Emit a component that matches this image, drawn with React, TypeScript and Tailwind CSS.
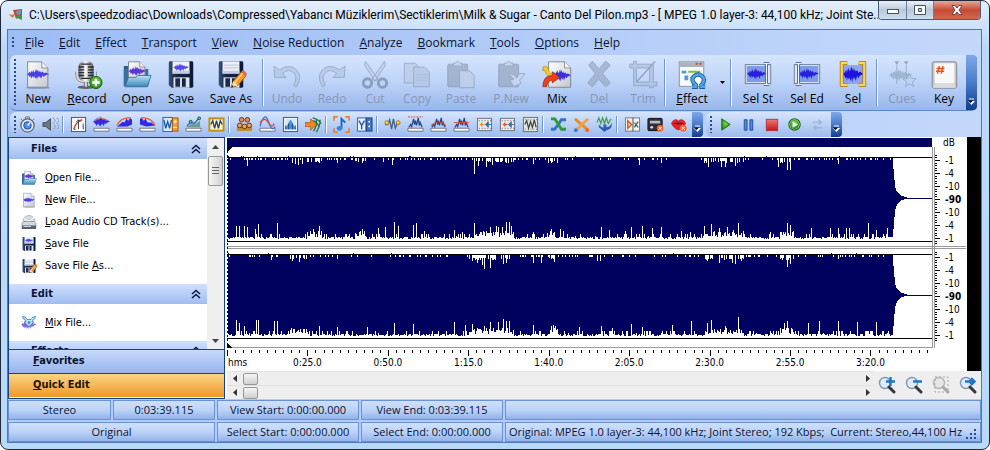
import type { ReactNode } from "react";

const MENU = [
  "File",
  "Edit",
  "Effect",
  "Transport",
  "View",
  "Noise Reduction",
  "Analyze",
  "Bookmark",
  "Tools",
  "Options",
  "Help",
];

const WAVE_D =
  "M0 6L2 5L3 3L4 5L5 2L6 4L7 1L8 4L9 3L10 0L11 3L12 1L13 4L14 2L15 4L17 3L18 5L20 4L24 6L20 7L18 9L17 7L15 11L14 8L13 10L12 8L11 12L10 9L9 11L8 8L7 10L6 8L5 11L4 8L3 9L2 7Z";

function Wave({ at, fill = "#3a2ee0" }: { at: string; fill?: string }) {
  return <path d={WAVE_D} fill={fill} transform={at} />;
}

function Defs() {
  return (
    <svg className="absolute size-0" aria-hidden="true">
      <defs>
        <linearGradient id="paper" x1="0" y1="0" x2="1" y2="1">
          <stop offset="0" stopColor="#ffffff" />
          <stop offset="1" stopColor="#c3c7ce" />
        </linearGradient>
        <linearGradient id="metal" x1="0" y1="0" x2="1" y2="0">
          <stop offset="0" stopColor="#55585c" />
          <stop offset=".45" stopColor="#ffffff" />
          <stop offset="1" stopColor="#4a4d52" />
        </linearGradient>
        <linearGradient id="folder" x1="0" y1="0" x2="0" y2="1">
          <stop offset="0" stopColor="#b9e2f7" />
          <stop offset="1" stopColor="#3a87b8" />
        </linearGradient>
        <linearGradient id="disk" x1="0" y1="0" x2="1" y2="0">
          <stop offset="0" stopColor="#39527c" />
          <stop offset=".3" stopColor="#142445" />
          <stop offset="1" stopColor="#0b1a38" />
        </linearGradient>
        <radialGradient id="green" cx=".5" cy=".35" r=".7">
          <stop offset="0" stopColor="#7edc55" />
          <stop offset="1" stopColor="#17800f" />
        </radialGradient>
        <linearGradient id="red" x1="0" y1="0" x2="0" y2="1">
          <stop offset="0" stopColor="#f07b73" />
          <stop offset="1" stopColor="#c2151b" />
        </linearGradient>
      </defs>
    </svg>
  );
}

function Page() {
  return (
    <>
      <ellipse cx="16" cy="30" rx="13" ry="1.5" fill="#4c6a96" opacity=".45" />
      <path d="M5 2.5H20L26.5 9V29.5H5Z" fill="url(#paper)" stroke="#7d848f" />
      <path d="M20 2.5V9H26.5" fill="#f4f5f7" stroke="#8b919b" />
    </>
  );
}

function Floppy() {
  return (
    <>
      <path d="M3 3.5Q3 2 4.500 2H27.500Q29 2 29 3.500V28.500Q29 30 27.500 30H6L3 27Z" fill="url(#disk)" />
      <rect x="7" y="2" width="18" height="13" fill="#eef1fa" />
      <path d="M7 12H25V15H7Z" fill="#c4cbe0" />
      <rect x="8" y="19" width="17" height="11" fill="#dfe3ea" />
      <rect x="10" y="20" width="5" height="9" fill="#1b2b4d" />
      <rect x="17" y="20" width="4" height="9" fill="#142445" />
    </>
  );
}

function Pencil() {
  return (
    <g>
      <path d="M16 30L18.500 23L27 13L32 17.500L23.500 27.500Z" fill="#f29a27" stroke="#8c4a0c" strokeWidth=".8" />
      <path d="M20 24.500L28.500 14.500" stroke="#ffd07a" strokeWidth="1.500" />
      <path d="M27 13L29 11L33 15L32 17.500Z" fill="#d96a62" />
      <path d="M16 30L18.500 23L23.500 27.500Z" fill="#f7dcae" />
      <path d="M16 30L17 27L19 28.600Z" fill="#222" />
    </g>
  );
}

const GREY = { fill: "#b3c6e2", stroke: "#8496b2", strokeWidth: 1 };

const BIG: Record<string, ReactNode> = {
  new: (
    <>
      <Page />
      <Wave at="translate(4 10) scale(1 .95)" fill="#4a3fe6" />
    </>
  ),
  record: (
    <>
      <ellipse cx="15" cy="29.500" rx="9" ry="1.800" fill="#5c6470" />
      <path d="M4 13V17Q4 25 15 25T26 17V13" fill="none" stroke="#d9dde2" strokeWidth="3" />
      <path d="M4 13V17Q4 25 15 25T26 17V13" fill="none" stroke="#6d737c" strokeWidth=".8" />
      <path d="M13 24H17V29H13Z" fill="url(#metal)" />
      <rect x="7" y="2" width="16" height="21" rx="6" fill="url(#metal)" />
      <path d="M7 8H13M7 11H13M7 14H13M7 17H13M17 8H23M17 11H23M17 14H23M17 17H23M10 5H20M10 20H20" stroke="#2a2c30" strokeWidth="1.400" />
      <circle cx="25.500" cy="24.500" r="6.500" fill="url(#green)" stroke="#11680c" />
      <path d="M25.500 20.500V28.500M21.500 24.500H29.500" stroke="#fff" strokeWidth="2.500" />
    </>
  ),
  open: (
    <>
      <path d="M2 7H8L10 10V28H2Z" fill="#2d5f8e" />
      <path d="M2 10H28V28H2Z" fill="#3b6f9f" />
      <path d="M7 2.500H19L24.500 8V20H7Z" fill="url(#paper)" stroke="#7d848f" />
      <path d="M19 2.500V8H24.500" fill="#f4f5f7" stroke="#8b919b" />
      <Wave at="translate(7 7) scale(.78 .9)" fill="#5a35d8" />
      <path d="M3 29L7 19H15L17 17H31L27 29Z" fill="url(#folder)" stroke="#27608f" strokeWidth=".8" />
    </>
  ),
  save: (
    <>
      <Floppy />
      <Wave at="translate(8 4) scale(.68 .75)" fill="#5447ee" />
    </>
  ),
  saveas: (
    <>
      <Floppy />
      <path d="M8 6H24M8 9H24" stroke="#b9bfcc" />
      <Pencil />
    </>
  ),
  undo: <path d="M2 7L3 19H15L11 15Q18 9 23 14T23 27L26 29Q33 18 26 11T8 11Z" {...GREY} />,
  redo: <path d="M30 7L29 19H17L21 15Q14 9 9 14T9 27L6 29Q-1 18 6 11T24 11Z" {...GREY} />,
  cut: (
    <>
      <path d="M6 2L19 21L16 23L5 6ZM26 2L13 21L16 23L27 6Z" fill="#bccde6" stroke="#8496b2" />
      <circle cx="8" cy="25" r="4.500" fill="none" stroke="#7788a4" strokeWidth="3" />
      <circle cx="24" cy="25" r="4.500" fill="none" stroke="#7788a4" strokeWidth="3" />
    </>
  ),
  copy: (
    <>
      <path d="M2.500 4H14L19 9V25H2.500Z" fill="#b9cbe6" stroke="#8a9dbc" />
      <path d="M12.500 8H24L29 13V29H12.500Z" fill="#b4c6e0" stroke="#8597b6" />
      <path d="M15 16H26M15 19H26M15 22H26" stroke="#9fb2cf" />
    </>
  ),
  paste: (
    <>
      <rect x="2" y="5" width="21" height="24" rx="1" fill="#94a5bf" stroke="#7d8eaa" />
      <path d="M8 7V4H10Q12 0 15 4H17V7Z" fill="#c3d2e8" stroke="#8799b5" />
      <path d="M14.500 12H25L30 17V30H14.500Z" fill="#bccde6" stroke="#8597b6" />
    </>
  ),
  pnew: (
    <>
      <rect x="3" y="5" width="21" height="24" rx="1" fill="#94a5bf" stroke="#7d8eaa" />
      <path d="M9 7V4H11Q13 0 16 4H18V7Z" fill="#c3d2e8" stroke="#8799b5" />
      <path d="M13 14L20 17L22 20L25 15H31L25 22L27 25L19 29L15 22L19 21Z" fill="#c6d5ea" stroke="#8597b6" />
    </>
  ),
  mix: (
    <>
      <path d="M7 2.500H24L30.500 9V29.500H7Z" fill="url(#paper)" stroke="#7d848f" />
      <path d="M24 2.500V9H30.500" fill="#f4f5f7" stroke="#8b919b" />
      <Wave at="translate(11 10) scale(.82 1.150)" fill="#3a2ee0" />
      <path d="M1 8Q6 6 7 11T14 15V19Q6 19 4 14T1 12Z" fill="#f8c92c" stroke="#b78308" strokeWidth=".7" />
      <path d="M1 29Q1 17 11 17V13L19 19L11 25V22Q6 22 5 29Z" fill="#e8421c" stroke="#9c1f08" strokeWidth=".7" />
    </>
  ),
  del: (
    <path d="M5 6L9 2L16 10L23 2L28 6L20 15L28 25L23 29L16 21L9 29L4 25L12 15Z" fill="#97a9c4" stroke="#8294b1" />
  ),
  trim: (
    <>
      <path d="M2 5H6V2H9V5H27V24H31V28H27V30H23V28H6V9H2ZM9 9V24H23V9Z" fill="#adc0dc" fillRule="evenodd" stroke="#8294b1" />
      <path d="M9 24L29 2" stroke="#7788a4" strokeWidth="1.500" />
    </>
  ),
  effect: (
    <>
      <rect x="2.500" y="2.500" width="26" height="26" fill="#f8fafc" stroke="#8a929d" />
      <path d="M3 3H28V8H3Z" fill="#aab3c0" />
      <path d="M20 4.500H22M24 4.500H26" stroke="#d43d2b" strokeWidth="2" />
      <path d="M5 12H10V15H5ZM8 17H12V22H8Z" fill="#4f9ade" />
      <path d="M12 13H25M14 19H20" stroke="#7bbf4a" strokeWidth="2" />
      <path d="M16 29H20V27Q14 22 18 18Q23 14 27 18Q31 22 26 27V29H30" fill="none" stroke="#1b5e9b" strokeWidth="4.500" />
      <path d="M16 29H20V27Q14 22 18 18Q23 14 27 18Q31 22 26 27V29H30" fill="none" stroke="#4fa6e6" strokeWidth="2.600" />
    </>
  ),
  selst: (
    <>
      <rect x="2.500" y="5.500" width="27" height="20" fill="#dfe7f6" stroke="#6f7d95" />
      <rect x="4" y="7" width="20" height="17" fill="#7f9be6" />
      <Wave at="translate(4 9) scale(.9 1.050)" fill="#2620dc" />
      <path d="M22 4.500H28M22 26.500H28M25 4V27" stroke="#1e5a96" strokeWidth="3" />
      <path d="M22 4.500H28M22 26.500H28M25 4V27" stroke="#e8f5ff" strokeWidth="1.300" />
    </>
  ),
  seled: (
    <>
      <rect x="2.500" y="5.500" width="27" height="20" fill="#dfe7f6" stroke="#6f7d95" />
      <rect x="8" y="7" width="20" height="17" fill="#7f9be6" />
      <Wave at="translate(7 9) scale(.9 1.050)" fill="#2620dc" />
      <path d="M4 4.500H10M4 26.500H10M7 4V27" stroke="#1e5a96" strokeWidth="3" />
      <path d="M4 4.500H10M4 26.500H10M7 4V27" stroke="#e8f5ff" strokeWidth="1.300" />
    </>
  ),
  sel: (
    <>
      <rect x="5" y="6" width="22" height="20" fill="#8ea5ea" />
      <Wave at="translate(5 7) scale(.92 1.450)" fill="#1d12dc" />
      <path d="M10 4H4V27H10M22 4H28V27H22" fill="none" stroke="#a8720a" strokeWidth="4" />
      <path d="M10 4H4V27H10M22 4H28V27H22" fill="none" stroke="#ffd65a" strokeWidth="2.400" />
    </>
  ),
  cues: (
    <>
      <Wave at="translate(2 10) scale(1.050 1.100)" fill="#93a6c4" />
      <path d="M8 2H13L10.500 6ZM18 2H23L20.500 6Z" fill="#7e90ae" />
      <path d="M10.500 6V26M20.500 6V20" stroke="#8597b6" />
      <path d="M24 15L26 20L31 20.500L27 24L28.500 29L24 26L19.500 29L21 24L17 20.500L22 20Z" fill="#bfcfe6" stroke="#8a9dbc" />
    </>
  ),
  key: (
    <>
      <rect x="3.500" y="2.500" width="26" height="28" rx="2" fill="#c9c9cb" stroke="#7f848c" />
      <path d="M6 4H27V25H6Z" fill="#f8f8f8" />
      <path d="M4 30L7 25H26L29 30Z" fill="#dcdcde" />
      <path d="M11 7L9 15M15 7L13 15M8 9.500H16.500M7.500 12.500H16" stroke="#e2531d" strokeWidth="1.600" />
    </>
  ),
};

type Tool = { icon?: string; label?: string; width?: string; off?: boolean; key0?: boolean };

const TOOLS: Tool[] = [
  { icon: "new", label: "New", width: "w-11" },
  { icon: "record", label: "Record", width: "w-[54px]", key0: true },
  { icon: "open", label: "Open", width: "w-[46px]" },
  { icon: "save", label: "Save", width: "w-[42px]" },
  { icon: "saveas", label: "Save As", width: "w-[58px]" },
  {},
  { icon: "undo", label: "Undo", width: "w-[42px]", off: true },
  { icon: "redo", label: "Redo", width: "w-12", off: true },
  { icon: "cut", label: "Cut", width: "w-[38px]", off: true },
  { icon: "copy", label: "Copy", width: "w-[46px]", off: true },
  { icon: "paste", label: "Paste", width: "w-[42px]", off: true },
  { icon: "pnew", label: "P.New", width: "w-[58px]", off: true },
  { icon: "mix", label: "Mix", width: "w-[34px]" },
  { icon: "del", label: "Del", width: "w-[50px]", off: true },
  { icon: "trim", label: "Trim", width: "w-[38px]", off: true },
  {},
  { icon: "effect", label: "Effect", width: "w-12", key0: true },
  { icon: "caret", label: "Effect list", width: "w-3" },
  {},
  { icon: "selst", label: "Sel St", width: "w-12" },
  { icon: "seled", label: "Sel Ed", width: "w-[50px]" },
  { icon: "sel", label: "Sel", width: "w-[42px]" },
  {},
  { icon: "cues", label: "Cues", width: "w-11", off: true },
  { icon: "key", label: "Key", width: "w-10" },
];

const base = <path d="M1 13H17V16H1Z" fill="#fff" stroke="#555d6b" strokeWidth=".8" />;
const spikes = <path d="M2 12L4 9L5 11L7 3L8 9L9 5L10 10L12 2L13 10L14 7L16 12" fill="none" stroke="#27468a" strokeWidth="1.300" />;
const frame = <rect x="1.500" y="1.500" width="15" height="15" fill="#f6f8fb" stroke="#4b5360" />;

function Panel({ accent }: { accent: string }) {
  return (
    <>
      <rect x="1.500" y="2.500" width="15" height="13" fill="#e9eaec" stroke="#6b6f76" />
      <path d="M3 5H16M3 13H16" stroke="#555" strokeDasharray="1 2" />
      <path d="M4 9H9M6 7V11" stroke={accent} strokeWidth="1.500" />
      <path d="M10 9L13 6V12ZM13 9H16" stroke="#2f6db4" fill="#2f6db4" />
    </>
  );
}

const SMALL: Record<string, ReactNode> = {
  timer: (
    <>
      <path d="M7 1H11V4H7ZM2 3L4 5M16 3L14 5" stroke="#66707e" fill="#d7dbe0" />
      <circle cx="9" cy="10" r="7" fill="#dfe8f5" stroke="#5e6b7f" strokeWidth="1.400" />
      <circle cx="9" cy="10" r="4" fill="#4f8fe8" stroke="#1f4fa8" />
      <path d="M9 10L12 7" stroke="#fff" strokeWidth="1.500" />
    </>
  ),
  speaker: (
    <>
      <path d="M1 7H4L9 3V15L4 11H1Z" fill="#6d7784" stroke="#444b55" />
      <path d="M12 2L14 5L12 8L14 11L12 15M16 2L18 5L16 8L18 11L16 15" fill="none" stroke="#7f8a99" strokeDasharray="2 1" />
    </>
  ),
  gauge: (
    <>
      {frame}
      <path d="M4 14Q6 6 13 4" fill="none" stroke="#d14a22" strokeWidth="1.500" />
      <path d="M4 14H6M9 14V4M7 6L9 4L11 6M14 8V14" stroke="#3c4656" fill="none" />
    </>
  ),
  blue: (
    <>
      {base}
      <Wave at="translate(0 0) scale(.75 1)" fill="#3428e0" />
      <path d="M2 5Q9 0 16 5" stroke="#e16b52" fill="none" />
    </>
  ),
  fadein: (
    <>
      {base}
      <path d="M1 11L5 8L7 6L9 7L11 3L13 5L15 2L17 4V9L12 11Z" fill="#3428e0" />
      <path d="M1 10Q5 1 16 2" stroke="#e8562a" strokeWidth="1.300" fill="none" />
    </>
  ),
  fadeout: (
    <>
      {base}
      <path d="M1 3L3 2L5 5L7 3L9 7L13 7L17 10L8 11L1 9Z" fill="#3428e0" />
      <path d="M2 2Q13 1 17 10" stroke="#e8562a" strokeWidth="1.300" fill="none" />
    </>
  ),
  stretch: (
    <>
      <rect x="1" y="1.500" width="10" height="15" fill="#d8ecff" stroke="#2c62a0" />
      <path d="M2 4L4 13L6 6L8 13L10 4" fill="none" stroke="#1d55a5" strokeWidth="1.400" />
      <rect x="11" y="2" width="6" height="14" fill="#f49b2f" stroke="#a8590b" />
      <path d="M14 4V8M12 6H16M12 12H16" stroke="#fff" />
    </>
  ),
  envelope: (
    <>
      {base}
      <path d="M3 11L7 8L11 9L16 5V12H3Z" fill="#6a9c8f" />
      <path d="M2 11L6 6L10 8L15 2" fill="none" stroke="#2e6fb6" strokeWidth="1.500" />
      <circle cx="6" cy="6" r="1.500" fill="#5fcf7a" stroke="#224455" />
      <circle cx="15" cy="2.500" r="1.500" fill="#5fcf7a" stroke="#224455" />
    </>
  ),
  normalize: (
    <>
      <rect x="1.500" y="2.500" width="15" height="13" fill="#fff4c4" stroke="#c28e12" strokeWidth="2" />
      <path d="M3 9L5 5L7 13L9 5L11 13L13 5L15 9" fill="none" stroke="#2a4277" strokeWidth="1.400" />
    </>
  ),
  chorus: (
    <>
      <path d="M1 16V11H17V16Z" fill="#c58a35" />
      <circle cx="4" cy="10" r="2.500" fill="#e2a566" stroke="#5d2f10" />
      <circle cx="9" cy="11" r="2.500" fill="#e2a566" stroke="#5d2f10" />
      <circle cx="14" cy="10" r="2.500" fill="#e2a566" stroke="#5d2f10" />
      <circle cx="6" cy="4" r="2.500" fill="#d9925a" stroke="#7a2a10" />
      <circle cx="12" cy="4" r="2.500" fill="#d9925a" stroke="#7a2a10" />
    </>
  ),
  flanger: (
    <>
      {base}
      <path d="M1 11Q6-6 10 6T17 11" fill="none" stroke="#3a72d0" strokeWidth="1.300" />
      <path d="M1 7Q6 0 10 7T16 8" fill="none" stroke="#db4334" strokeWidth="1.300" />
    </>
  ),
  equalizer: (
    <>
      {frame}
      <rect x="3" y="3" width="12" height="12" fill="#d5e8fa" />
      <path d="M3 14L6 9L8 5L9 4L10 5L12 9L15 14Z" fill="#3e94e2" />
      <path d="M4 10V14M7 8V14M11 8V14M14 10V14" stroke="#26446f" />
    </>
  ),
  reverb: (
    <>
      <path d="M8 2Q14 3 17 8M8 5Q13 6 15 12M9 16Q13 10 12 4M12 17Q16 11 16 4" fill="none" stroke="#1f7a50" strokeWidth="1.400" />
      <path d="M0 7H6V3L12 9L6 15V11H0Z" fill="#f28a22" stroke="#b1550a" strokeWidth=".8" />
    </>
  ),
  pitch: (
    <>
      <path d="M1 5V1H5M13 1H17V5M17 13V17H13M5 17H1V13" fill="none" stroke="#f08228" strokeWidth="1.800" />
      <path d="M9 13V3L13 7" fill="none" stroke="#1d66bd" strokeWidth="2" />
      <ellipse cx="7" cy="13" rx="3" ry="2.500" fill="#2f8be0" />
    </>
  ),
  vocoder: (
    <>
      <rect x="1.500" y="2" width="9" height="14" fill="#e4f1ff" stroke="#2c62a0" />
      <path d="M3 5L6 10L9 5M6 10V14" fill="none" stroke="#27589b" strokeWidth="1.500" />
      <rect x="11" y="2" width="6" height="14" fill="#3d77c7" stroke="#1b427f" />
      <circle cx="14" cy="6" r="1" fill="#fff" />
      <circle cx="14" cy="11" r="1" fill="#fff" />
    </>
  ),
  restore: (
    <>
      <path d="M1 9H4L6 4L8 14L10 3L12 13L14 8H17" fill="none" stroke="#40608e" strokeWidth="1.400" />
      <circle cx="3" cy="7" r="2" fill="#ffd23d" stroke="#a87708" />
      <circle cx="15" cy="7" r="2" fill="#ffd23d" stroke="#a87708" />
    </>
  ),
  clip: (
    <>
      {base}
      {spikes}
      <path d="M1 1H17" stroke="#ee4a20" strokeDasharray="2 1" />
    </>
  ),
  pops: (
    <>
      {base}
      {spikes}
      <path d="M1 10Q9 3 17 10" stroke="#d9432c" fill="none" />
    </>
  ),
  hiss: (
    <>
      {base}
      {spikes}
      <path d="M1 7H17" stroke="#ee4a20" />
    </>
  ),
  panelA: <Panel accent="#e59a20" />,
  panelB: <Panel accent="#e1592c" />,
  profile: (
    <>
      <rect x="1.500" y="1.500" width="15" height="15" fill="#e5e6e8" stroke="#6b6f76" />
      <path d="M3 4H16M3 14H16" stroke="#666" strokeDasharray="1 2" />
      <path d="M3 9L5 5L7 13L9 6L11 12L13 4L15 12" fill="none" stroke="#37493c" strokeWidth="1.300" />
    </>
  ),
  crossA: (
    <>
      <path d="M1 14H5Q9 9 12 4H17" fill="none" stroke="#2f74cc" strokeWidth="3" />
      <path d="M1 3H5Q9 9 12 14H17" fill="none" stroke="#2d9a33" strokeWidth="3" />
    </>
  ),
  crossB: (
    <>
      <path d="M2 3L16 15" stroke="#ee8a23" strokeWidth="3" />
      <path d="M16 3L3 15" stroke="#e7a640" strokeWidth="3" />
      <circle cx="3" cy="15" r="2" fill="#3a78c8" />
      <circle cx="15" cy="15" r="2" fill="#ee6a23" />
    </>
  ),
  invert: (
    <>
      <path d="M1 7L3 2L5 8L7 2L9 8L11 2L13 8L16 3" fill="none" stroke="#45a05a" strokeWidth="1.300" />
      <path d="M3 9Q6 13 8 12V9H11V12Q15 12 17 7Q17 15 11 15L9 17L3 12Z" fill="#2b5fb0" />
    </>
  ),
  split: (
    <>
      <rect x="1.500" y="2" width="15" height="14" fill="#f2f2f2" stroke="#777" />
      <path d="M4 5V13L8 9Z" fill="none" stroke="#e2561d" strokeWidth="1.600" />
      <path d="M9.500 2V16" stroke="#444" />
      <path d="M11 12L15 6M11 7L15 12" stroke="#376c58" strokeWidth="1.400" />
    </>
  ),
  batch: (
    <>
      <rect x="1" y="2.500" width="15" height="13" rx="1" fill="#2e3036" stroke="#111" />
      <path d="M3 5H14V8H3Z" fill="#b7bcc4" />
      <circle cx="5" cy="12" r="1.500" fill="#ddd" />
      <circle cx="14" cy="13" r="3.500" fill="#ee6a2b" />
      <path d="M12.500 11.500L15.500 14.500M15.500 11.500L12.500 14.500" stroke="#fff" />
    </>
  ),
  voice: (
    <>
      <path d="M1 8Q5 1 9 5Q13 1 17 8Q13 15 9 15T1 8Z" fill="#d8262c" />
      <path d="M3 8Q9 6 15 8Q9 10 3 8Z" fill="#8e0e16" />
      <circle cx="14" cy="13" r="3.500" fill="#ee6a2b" />
      <path d="M12.500 11.500L15.500 14.500M15.500 11.500L12.500 14.500" stroke="#fff" />
    </>
  ),
  play: <path d="M5 3L14 9L5 15Z" fill="url(#green)" stroke="#19700f" />,
  pause: <path d="M4.500 4H7.500V15H4.500ZM10.500 4H13.500V15H10.500Z" fill="#4f8bd8" stroke="#1d4e9c" />,
  stop: <rect x="3.500" y="3.500" width="12" height="12" fill="url(#red)" stroke="#b3353a" />,
  playloop: (
    <>
      <circle cx="9" cy="9" r="6" fill="#fff" stroke="#176410" strokeWidth="1.200" />
      <circle cx="9" cy="9" r="5" fill="url(#green)" />
      <path d="M7 5.500L12.500 9L7 12.500Z" fill="#fff" />
    </>
  ),
  repeat: <path d="M4 6.500H12M10 4L13 6.500L10 9M14 12.500H6M8 10L5 12.500L8 15" fill="none" stroke="#9db3d6" strokeWidth="1.500" />,
};

const SMALL_GROUPS: [string, string][][] = [
  [["timer", "Timer"], ["speaker", "Volume"]],
  [
    ["gauge", "Amplify"],
    ["blue", "Fade"],
    ["fadein", "Fade in"],
    ["fadeout", "Fade out"],
    ["stretch", "Stretch"],
    ["envelope", "Envelope"],
    ["normalize", "Normalize"],
  ],
  [["chorus", "Chorus"], ["flanger", "Flanger"], ["equalizer", "Equalizer"], ["reverb", "Reverb"]],
  [["pitch", "Pitch"], ["vocoder", "Vocoder"]],
  [
    ["restore", "Restore"],
    ["clip", "Clip repair"],
    ["pops", "Remove pops"],
    ["hiss", "Remove hiss"],
    ["panelA", "Low filter"],
    ["panelB", "High filter"],
    ["profile", "Noise profile"],
  ],
  [["crossA", "Swap channels"], ["crossB", "Cut channels"], ["invert", "Invert"]],
  [["split", "Split"], ["batch", "Batch"], ["voice", "Remove voice"]],
];

const PLAYBACK: [string, string][] = [
  ["play", "Play"],
  ["pause", "Pause"],
  ["stop", "Stop"],
  ["playloop", "Play loop"],
  ["repeat", "Repeat"],
];

function Grip() {
  return <span className="my-1 ml-1 w-0.5 shrink-0 bg-[repeating-linear-gradient(#2a4a8c_0_2px,transparent_2px_4px)]" />;
}

function Separator() {
  return <span className="mx-0.5 my-1 w-0.5 shrink-0 self-stretch border-l border-[#6f97d6] bg-white" />;
}

function Overflow() {
  return (
    <button
      type="button"
      aria-label="More buttons"
      className="flex w-[11px] shrink-0 items-end justify-center rounded-r-sm bg-linear-to-b from-[#7fa8e8] via-[#4a7bcb] to-[#143c8c] pb-1"
    >
      <svg className="h-2 w-[7px]" viewBox="0 0 7 8">
        <path d="M1 1H6" stroke="#fff" />
        <path d="M0 3H7L3.500 7Z" fill="#fff" />
        <path d="M1 0H5M0 2.500H5L2.500 5Z" fill="#000" />
      </svg>
    </button>
  );
}

function SmallButton({ icon, label }: { icon: string; label: string }) {
  return (
    <button type="button" aria-label={label} className="flex w-[23px] shrink-0 items-center justify-center">
      <svg className="size-[17px]" viewBox="0 0 18 18">{SMALL[icon]}</svg>
    </button>
  );
}

function ToolButton({ tool }: { tool: Tool }) {
  if (!tool.icon || !tool.label) return <Separator />;
  if (tool.icon === "caret") {
    return (
      <button type="button" aria-label={tool.label} className={`flex shrink-0 items-center justify-center ${tool.width}`}>
        <svg className="h-[3px] w-[5px]" viewBox="0 0 5 3"><path d="M0 0H5L2.500 3Z" /></svg>
      </button>
    );
  }
  return (
    <button
      type="button"
      disabled={tool.off}
      className={`flex shrink-0 flex-col items-center pt-1 whitespace-nowrap text-black disabled:text-[#8796b3] ${tool.width}`}
    >
      <svg className={`size-8 ${tool.off ? "opacity-70" : ""}`} viewBox="-1 0 34 33">{BIG[tool.icon]}</svg>
      <span className="leading-4">
        {tool.key0 ? <><u>{tool.label[0]}</u>{tool.label.slice(1)}</> : tool.label}
      </span>
    </button>
  );
}

function TitleBar() {
  return (
    <header className="flex h-7 shrink-0 items-start">
      <svg className="mt-2 mr-1.5 h-3 w-4 shrink-0" viewBox="0 0 16 12">
        <path d="M0 4Q3 7 8 5L6 9Z" fill="#e0742c" />
        <path d="M6 1L15 0V7L9 10Z" fill="#c8452e" />
        <path d="M9 2L14 1V5L10 6Z" fill="#4f9fd8" />
        <path d="M8 7L15 6V11L10 9Z" fill="#3d9a3c" />
      </svg>
      <h1 className="min-w-0 flex-1 overflow-hidden pt-1.5 font-['Roboto','Open_Sans',sans-serif] text-[12px] leading-4 whitespace-nowrap text-black">
        {"C:\\Users\\speedzodiac\\Downloads\\Compressed\\Yabancı Müziklerim\\Sectiklerim\\Milk & Sugar - Canto Del Pilon.mp3 - [ MPEG 1.0 layer-3: 44,100 kHz; Joint Ste..."}
      </h1>
      <div className="mr-px flex h-[19px] shrink-0 overflow-hidden rounded-b border border-t-0 border-[#4d5f78]">
        <button type="button" aria-label="Minimize" className="flex w-7 items-center justify-center border-r border-[#6c7f98] bg-linear-to-b from-[#e9f1f9] via-[#b8c9dd] to-[#cfdff0]">
          <svg className="h-3 w-3" viewBox="0 0 12 12"><rect x=".5" y="5.500" width="11" height="4" fill="#fff" stroke="#4a5260" /></svg>
        </button>
        <button type="button" aria-label="Maximize" className="flex w-[27px] items-center justify-center border-r border-[#6c7f98] bg-linear-to-b from-[#e9f1f9] via-[#b8c9dd] to-[#cfdff0]">
          <svg className="h-3 w-3" viewBox="0 0 12 12">
            <path d="M.5 1.500H11.500V10.500H.5ZM4.500 4.500V7.500H7.500V4.500Z" fill="#fff" fillRule="evenodd" stroke="#4a5260" />
          </svg>
        </button>
        <button type="button" aria-label="Close" className="flex w-[46px] items-center justify-center bg-linear-to-b from-[#e8a795] via-[#c54a34] to-[#d4674e]">
          <svg className="h-3 w-3" viewBox="0 0 12 12">
            <path d="M1 1.500H4L6 4L8 1.500H11L8 6L11 10.500H8L6 8L4 10.500H1L4 6Z" fill="#fff" stroke="#5b3038" strokeWidth=".8" />
          </svg>
        </button>
      </div>
    </header>
  );
}

const SIDE_ICONS: Record<string, ReactNode> = {
  open: BIG.open,
  new: BIG.new,
  save: BIG.save,
  saveas: BIG.saveas,
  cd: (
    <>
      <circle cx="16" cy="15" r="12" fill="#d8dce2" stroke="#7b818b" />
      <circle cx="16" cy="15" r="4" fill="#fff" stroke="#8b919b" />
      <path d="M16 15L26 7M16 15L6 9" stroke="#fff" strokeWidth="2" />
      <path d="M2 19L6 15H26L30 19V29H2Z" fill="#d5d8dd" stroke="#5f6670" />
      <path d="M2 23H30V30H2Z" fill="#596172" />
      <path d="M5 25H20" stroke="#c9ced6" strokeWidth="2" />
    </>
  ),
  mix: (
    <>
      <Wave at="translate(0 10) scale(1.300 1.600)" fill="#8568dd" />
      <path d="M3 3Q9 2 12 9H20Q23 2 29 3L28 7Q24 7 22 14H26L16 23L6 14H10Q8 7 4 7Z" fill="#bfe3fa" stroke="#2e83c4" strokeWidth="1.600" />
      <circle cx="16" cy="15" r="2.500" fill="#2e83c4" />
    </>
  ),
};

type SideItem = { icon: string; text: string; key: number };

const FILE_ITEMS: SideItem[] = [
  { icon: "open", text: "Open File...", key: 0 },
  { icon: "new", text: "New File...", key: 0 },
  { icon: "cd", text: "Load Audio CD Track(s)...", key: 0 },
  { icon: "save", text: "Save File", key: 0 },
  { icon: "saveas", text: "Save File As...", key: 10 },
];

const EDIT_ITEMS: SideItem[] = [{ icon: "mix", text: "Mix File...", key: 0 }];

function SideGroup({ title, items }: { title: string; items: SideItem[] }) {
  return (
    <section>
      <h2 className="flex h-5 items-center justify-between bg-linear-to-b from-[#cfe0fc] to-[#9fbdf0] pr-1.5 pl-[22px] font-bold text-[#0b1440]">
        {title}
        <svg className="size-2.5" viewBox="0 0 10 10">
          <path d="M1 5L5 1.500L9 5M1 9L5 5.500L9 9" fill="none" stroke="#0b1440" strokeWidth="1.400" />
        </svg>
      </h2>
      <ul className="pt-2 pb-[7px]">
        {items.map((item) => (
          <li key={item.text} className="h-[22px] pl-3">
            <a href="#" className="flex h-full items-center gap-2 text-black">
              <svg className="size-4 shrink-0" viewBox="0 0 32 32">{SIDE_ICONS[item.icon]}</svg>
              <span>
                {item.text.slice(0, item.key)}
                <u>{item.text[item.key]}</u>
                {item.text.slice(item.key + 1)}
              </span>
            </a>
          </li>
        ))}
      </ul>
    </section>
  );
}

function SidePanel() {
  return (
    <aside className="w-[217px] shrink-0 border border-[#14428c] bg-white font-['DejaVu_Sans_Condensed','Open_Sans',sans-serif] text-[11px]">
      <div className="flex h-[211px]">
        <div className="min-w-0 flex-1 overflow-hidden border-t border-[#cfe0fc]">
          <SideGroup title="Files" items={FILE_ITEMS} />
          <SideGroup title="Edit" items={EDIT_ITEMS} />
          <SideGroup title="Effects" items={[]} />
        </div>
        <div className="flex w-[17px] shrink-0 flex-col bg-[#efefef]">
          <button type="button" aria-label="Scroll up" className="flex h-[18px] items-center justify-center">
            <svg className="h-1 w-[7px]" viewBox="0 0 7 4"><path d="M0 4H7L3.500 0Z" fill="#444" /></svg>
          </button>
          <div className="flex flex-1 flex-col">
            <div className="mx-px flex h-[30px] items-center justify-center rounded-[2px] border border-[#979797] bg-linear-to-r from-[#f6f6f6] to-[#d2d2d2]">
              <span className="h-2 w-[7px] bg-[repeating-linear-gradient(#666_0_1px,transparent_1px_3px)]" />
            </div>
          </div>
          <button type="button" aria-label="Scroll down" className="flex h-4 items-center justify-center">
            <svg className="h-1 w-[7px]" viewBox="0 0 7 4"><path d="M0 0H7L3.500 4Z" fill="#444" /></svg>
          </button>
        </div>
      </div>
      <button type="button" className="block h-6 w-full border-t border-[#14428c] bg-linear-to-b from-[#c8dafa] to-[#96b4ec] pl-6 text-left font-bold text-[#0b1430]">
        <u>F</u>avorites
      </button>
      <button type="button" className="block h-6 w-full border-t border-[#14428c] bg-linear-to-b from-[#fbd482] to-[#ee9a1e] pl-6 text-left font-bold text-[#20140a]">
        <u>Q</u>uick Edit
      </button>
    </aside>
  );
}

type Channel = { top: number; seed: number; dips: number[][]; peaks: number[][]; rough: number[][] };

// [column, height] pairs; the small grain between them is generated
const CHANNELS: Channel[] = [
  {
    top: 19,
    seed: 11,
    dips: [[20, 8], [65, 5], [68, 6], [71, 7], [75, 6], [110, 5], [156, 4], [165, 7], [247, 16], [251, 8], [259, 9], [265, 7], [306, 6], [330, 5], [412, 7], [434, 5], [481, 9], [494, 9], [498, 9], [508, 8], [551, 9], [560, 12], [563, 12], [611, 6]],
    peaks: [[9, 12], [12, 12], [17, 12], [20, 11], [28, 9], [31, 14], [50, 15], [86, 9], [92, 12], [135, 9], [151, 10], [158, 11], [167, 16], [171, 12], [186, 13], [189, 15], [197, 7], [227, 8], [235, 6], [247, 15], [256, 7], [263, 11], [269, 12], [271, 11], [275, 11], [279, 16], [282, 16], [284, 12], [306, 6], [324, 9], [333, 9], [336, 7], [374, 11], [382, 8], [398, 7], [404, 11], [415, 12], [425, 10], [434, 11], [454, 7], [463, 6], [477, 12], [484, 14], [492, 10], [500, 11], [506, 8], [511, 15], [543, 6], [560, 15], [563, 13], [584, 10], [603, 10], [611, 10], [619, 10], [622, 10], [641, 15], [649, 8], [660, 10]],
    rough: [[80, 94], [128, 138], [247, 286], [320, 328], [476, 516], [553, 566]],
  },
  {
    top: 116,
    seed: 29,
    dips: [[44, 5], [65, 6], [72, 7], [110, 4], [245, 6], [250, 8], [255, 10], [257, 14], [263, 13], [276, 9], [279, 8], [306, 8], [314, 8], [327, 7], [370, 6], [373, 6], [480, 6], [492, 8], [505, 8], [508, 9], [514, 6], [560, 12], [563, 9], [611, 4]],
    peaks: [[9, 15], [12, 12], [17, 9], [29, 15], [31, 15], [47, 14], [50, 14], [92, 9], [110, 8], [140, 8], [167, 12], [186, 11], [227, 13], [238, 10], [245, 11], [257, 9], [263, 13], [271, 13], [276, 16], [279, 14], [282, 14], [306, 10], [324, 9], [326, 10], [328, 9], [352, 8], [374, 9], [385, 7], [404, 11], [415, 8], [445, 10], [464, 14], [480, 12], [484, 15], [498, 9], [511, 18], [557, 12], [560, 14], [581, 12], [592, 14], [611, 14], [630, 13], [649, 13]],
    rough: [[62, 80], [242, 286], [322, 330], [478, 516], [553, 566]],
  },
];

function channelPath({ top, seed, dips, peaks, rough }: Channel) {
  let state = seed;
  const random = () => {
    state = (state * 16807) % 2147483647;
    return state / 2147483647;
  };
  const mid = top + 41;
  const bottom = top + 81;
  const upper: string[] = [];
  const lower: string[] = [];
  for (let x = 1; x < 666; x++) {
    const isRough = rough.some(([from, to]) => x >= from && x <= to);
    const a = random();
    const b = random();
    const grain = isRough ? (a > 0.45 ? 1 + a * 4 : 0) : a > 0.8 ? 2 : a < 0.02 ? -2 : 0;
    const floor = isRough ? 2 + b * 6 : b > 0.85 ? 5 : b * 3;
    const dip = dips.find((d) => d[0] === x);
    const peak = peaks.find((p) => p[0] === x);
    const y1 = Math.round(top + 1 + (dip ? dip[1] : grain));
    const y2 = Math.round(bottom - (peak ? peak[1] : floor - 1));
    upper.push(`L${x} ${y1}H${x + 1}`);
    lower.unshift(`L${x + 1} ${y2}H${x}`);
  }
  return `M1 ${mid}${upper.join("")}L666 ${top + 6}L668 ${mid - 12}L670 ${mid - 6}L674 ${mid - 2}L680 ${mid - 1}V${mid + 1}L674 ${mid + 2}L670 ${mid + 7}L668 ${mid + 13}L666 ${bottom - 3}${lower.join("")}Z`;
}

function Waveforms() {
  return (
    <svg
      role="img"
      aria-label="Stereo waveform"
      className="block h-[210px] w-full"
      viewBox="0 0 705 210"
      preserveAspectRatio="none"
      shapeRendering="crispEdges"
    >
      <rect width="705" height="210" fill="#fff" />
      <rect width="705" height="9" y="0" fill="#00005f" />
      {CHANNELS.map((channel) => (
        <g key={channel.top}>
          <path d={channelPath(channel)} fill="#00005f" />
          <rect x="666" y={channel.top + 41} width="39" height="1" fill="#00005f" />
          <rect y={channel.top} width="705" height="1" fill="#000" />
          <rect y={channel.top + 84} width="705" height="1" fill="#000" />
        </g>
      ))}
      <path d="M0 108.500H705M0 110.500H705M0 209.500H705" stroke="#9a9a9a" />
      <path d="M.5 9V209" stroke="#000" strokeDasharray="2 2" />
      <path d="M0 9H5L0 14ZM0 210V205L5 210Z" fill="#000" />
    </svg>
  );
}

const DB_LABELS = ["-1", "-4", "-10", "-90", "-10", "-4", "-1"];
const DB_TICKS = Array.from({ length: 35 }, (_, i) => i - 2);

function DecibelScale() {
  return (
    <svg className="h-[210px] w-[35px] shrink-0 bg-white font-['DejaVu_Sans_Condensed','Open_Sans',sans-serif] text-[10px]">
      <text x="11" y="8">dB</text>
      <path d="M.5 9V210M2.500 9V210M0 108.500H34M0 110.500H34" stroke="#9a9a9a" />
      {[22, 119].map((top) => (
        <g key={top}>
          {DB_TICKS.map((i) => (
            <rect key={i} x="3" y={Math.round(top + i * 2.6)} width={i % 5 === 0 ? 5 : 2} height="1" fill="#000" />
          ))}
          {DB_LABELS.map((label, i) => (
            <text key={i} x="13" y={top + 4 + i * 13} fontWeight={label === "-90" ? 700 : 400}>
              {label}
            </text>
          ))}
        </g>
      ))}
    </svg>
  );
}

const DURATION = 219.115;
const RULER_LABELS = ["0:25.0", "0:50.0", "1:15.0", "1:40.0", "2:05.0", "2:30.0", "2:55.0", "3:20.0"];

function TimeRuler() {
  return (
    <svg className="block h-[23px] w-full bg-white font-['DejaVu_Sans_Condensed','Open_Sans',sans-serif] text-[10px]">
      {Array.from({ length: 88 }, (_, i) => (
        <rect
          key={i}
          x={`${((i * 2.5) / DURATION) * 100}%`}
          y="2"
          width="1"
          height={i % 10 === 0 ? 6 : 3}
          shapeRendering="crispEdges"
        />
      ))}
      <text x="1" y="18">hms</text>
      {RULER_LABELS.map((label, i) => (
        <text key={label} x={`${(((i + 1) * 25) / DURATION) * 100}%`} y="18" textAnchor="middle">
          {label}
        </text>
      ))}
    </svg>
  );
}

function ScrollRow({ label }: { label: string }) {
  return (
    <div className="flex h-3.5 items-center border-t border-[#e2e2e2] bg-[#eeeeee]">
      <button type="button" aria-label={`${label} left`} className="flex w-4 justify-center">
        <svg className="h-[7px] w-1" viewBox="0 0 4 7"><path d="M4 0V7L0 3.500Z" fill="#333" /></svg>
      </button>
      <div className="flex-1">
        <div className="h-3 w-[15px] rounded-[2px] border border-[#979797] bg-linear-to-b from-[#f6f6f6] to-[#d0d0d0]" />
      </div>
      <button type="button" aria-label={`${label} right`} className="flex w-3 justify-center">
        <svg className="h-[7px] w-1" viewBox="0 0 4 7"><path d="M0 0V7L4 3.500Z" fill="#333" /></svg>
      </button>
    </div>
  );
}

const ZOOMS = [
  { label: "Zoom in", mark: "M12.500 1V10M8 5.500H17", color: "#1f75c9" },
  { label: "Zoom out", mark: "M8 5.500H17", color: "#1f75c9" },
  { label: "Zoom selection", mark: "M3 1H16V16H3Z", color: "#a6a6a6" },
  { label: "Zoom full", mark: "M6 5.500H16M13 3L15.500 5.500L13 8L10.500 5.500Z", color: "#1f75c9" },
];

function ZoomButton({ label, mark, color }: { label: string; mark: string; color: string }) {
  const off = label === "Zoom selection";
  return (
    <button type="button" aria-label={label} disabled={off} className="flex w-[27px] justify-center">
      <svg className="size-[18px]" viewBox="0 0 18 18">
        <circle cx="7" cy="7" r="5.500" fill={off ? "#e6e6e6" : "#dcecf9"} stroke={off ? "#b5b5b5" : "#8297ad"} strokeWidth="1.400" />
        <path d="M11 11L16 16" stroke={off ? "#a9a9a9" : "#33373d"} strokeWidth="3" strokeLinecap="round" />
        <path d={mark} fill="none" stroke={color} strokeWidth={off ? 1 : 2.4} strokeDasharray={off ? "2 2" : undefined} />
      </svg>
    </button>
  );
}

function Cell({ children, className }: { children?: ReactNode; className: string }) {
  return (
    <div className={`h-5 truncate border border-[#6a92d4] bg-linear-to-b from-[#cfe0fb] via-[#bcd3f8] to-[#93b3ea] text-center leading-[18px] whitespace-pre ${className}`}>
      {children}
    </div>
  );
}

function StatusBar() {
  return (
    <footer className="flex flex-col gap-0.5 bg-[#b4cdf6] pt-px text-[11px] text-[#0b1430]">
      <div className="flex gap-0.5">
        <Cell className="w-[103px]">Stereo</Cell>
        <Cell className="w-[102px]">0:03:39.115</Cell>
        <Cell className="w-[142px]">View Start: 0:00:00.000</Cell>
        <Cell className="w-[142px]">View End: 0:03:39.115</Cell>
        <Cell className="min-w-0 flex-1" />
      </div>
      <div className="flex gap-0.5">
        <Cell className="w-[207px]">Original</Cell>
        <Cell className="w-[142px]">Select Start: 0:00:00.000</Cell>
        <Cell className="w-[142px]">Select End: 0:00:00.000</Cell>
        <div className="flex h-5 min-w-0 flex-1 items-center justify-between border border-[#6a92d4] bg-linear-to-b from-[#cfe0fb] via-[#bcd3f8] to-[#93b3ea] pl-[3px]">
          <span className="truncate leading-[18px] whitespace-pre">
            {"Original: MPEG 1.0 layer-3: 44,100 kHz; Joint Stereo; 192 Kbps;  Current: Stereo,44,100 Hz"}
          </span>
          <svg className="mr-0.5 size-3 shrink-0 self-end" viewBox="0 0 12 12">
            <path d="M8 0H10V2H8ZM8 4H10V6H8ZM4 4H6V6H4ZM8 8H10V10H8ZM4 8H6V10H4ZM0 8H2V10H0Z" fill="#2a4a9c" />
          </svg>
        </div>
      </div>
    </footer>
  );
}

export default function App() {
  return (
    <div className="flex min-h-screen flex-col overflow-hidden rounded-lg border border-[#20283c] bg-linear-to-b from-[#e4eefa] via-[#bcd9fa] via-10% to-[#b9d9fb] pr-[7px] pb-[6px] pl-[6px] font-['Open_Sans','Noto_Sans',sans-serif] text-[12px]">
      <Defs />
      <TitleBar />
      <div className="flex flex-1 flex-col border border-[#4f78b8] bg-[#b9cff5]">
        <nav className="flex h-[25px] items-center gap-[15px] bg-linear-to-r from-[#9dbdf5] to-[#c4d8fb]">
          <span className="ml-1 h-3 w-0.5 bg-[repeating-linear-gradient(#2a4a8c_0_2px,transparent_2px_4px)]" />
          {MENU.map((item, i) => (
            <button key={item} type="button" className={`whitespace-nowrap text-[#0b1430] ${i === 0 ? "-ml-1" : ""}`}>
              <u>{item[0]}</u>
              {item.slice(1)}
            </button>
          ))}
        </nav>
        <div className="bg-linear-to-r from-[#9dbdf5] to-[#c4d8fb] pl-0.5">
          <div role="toolbar" aria-label="Main" className="mr-1 flex h-14 rounded-md border-b border-[#5d86c8] bg-linear-to-b from-[#d6e5fd] via-[#bdd3f8] to-[#98b7ec]">
            <Grip />
            {TOOLS.map((tool, i) => <ToolButton key={i} tool={tool} />)}
            <span className="flex-1" />
            <Overflow />
          </div>
          <div className="flex gap-[3px] pt-px">
            <div role="toolbar" aria-label="Effects" className="flex h-[25px] rounded-md bg-linear-to-b from-[#d6e5fd] to-[#9dbbee]">
              <Grip />
              {SMALL_GROUPS.map((group, g) => (
                <div key={g} className="flex">
                  {g > 0 && <span className="my-1 mr-[3px] w-0.5 border-l border-[#6f97d6] bg-white" />}
                  {group.map(([icon, label]) => <SmallButton key={icon} icon={icon} label={label} />)}
                </div>
              ))}
              <span className="w-0.5" />
              <Overflow />
            </div>
            <div role="toolbar" aria-label="Playback" className="flex h-[25px] rounded-md bg-linear-to-b from-[#d6e5fd] to-[#9dbbee]">
              <Grip />
              <span className="w-0.5" />
              {PLAYBACK.map(([icon, label]) => <SmallButton key={icon} icon={icon} label={label} />)}
              <span className="w-0.5" />
              <Overflow />
            </div>
          </div>
        </div>
        <div className="flex">
          <SidePanel />
          <main className="flex min-w-0 flex-1 flex-col bg-white pl-0.5">
            <div className="flex">
              <div className="flex min-w-0 flex-1">
                <div className="flex min-w-0 flex-1 flex-col pt-px">
                  <Waveforms />
                  <TimeRuler />
                </div>
                <div className="pt-px">
                  <DecibelScale />
                </div>
              </div>
              <div className="w-3.5 shrink-0 bg-black" />
            </div>
            <div className="flex flex-1 bg-[#eeeeee]">
              <div className="min-w-0 flex-1">
                <ScrollRow label="View" />
                <ScrollRow label="Selection" />
              </div>
              <div className="flex w-[107px] items-center">
                {ZOOMS.map((zoom) => <ZoomButton key={zoom.label} {...zoom} />)}
              </div>
            </div>
          </main>
        </div>
        <StatusBar />
      </div>
    </div>
  );
}
